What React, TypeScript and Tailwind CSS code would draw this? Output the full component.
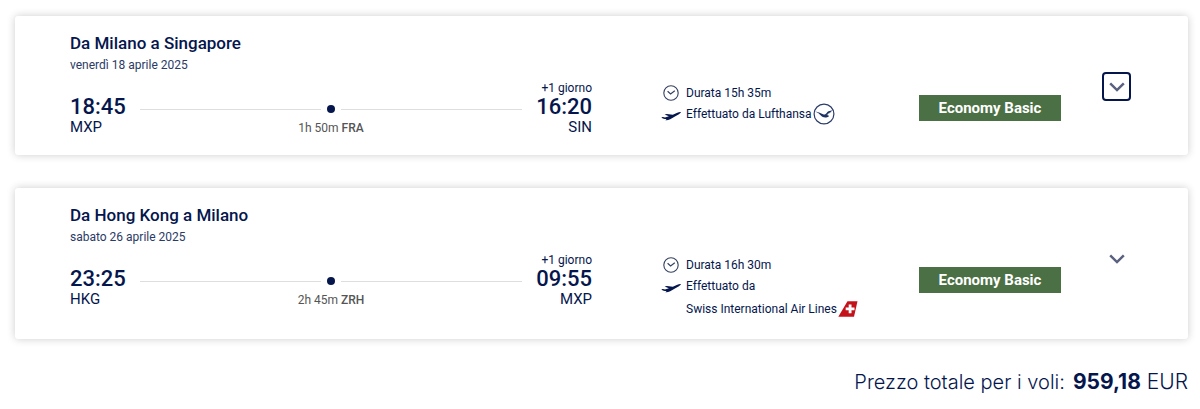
import React from "react";

type Flight = {
  title: string;
  date: string;
  departure: string;
  origin: string;
  arrival: string;
  destination: string;
  stop: string;
  stopCode: string;
  duration: string;
  carrier: "lufthansa" | "swiss";
  focused?: boolean;
};

const flights: Flight[] = [
  {
    title: "Da Milano a Singapore",
    date: "venerdì 18 aprile 2025",
    departure: "18:45",
    origin: "MXP",
    arrival: "16:20",
    destination: "SIN",
    stop: "1h 50m",
    stopCode: "FRA",
    duration: "Durata 15h 35m",
    carrier: "lufthansa",
    focused: true,
  },
  {
    title: "Da Hong Kong a Milano",
    date: "sabato 26 aprile 2025",
    departure: "23:25",
    origin: "HKG",
    arrival: "09:55",
    destination: "MXP",
    stop: "2h 45m",
    stopCode: "ZRH",
    duration: "Durata 16h 30m",
    carrier: "swiss",
  },
];

function ClockIcon() {
  return (
    <svg viewBox="0 0 16 16" className="size-4" fill="none" stroke="#35415f" aria-hidden="true">
      <circle cx="8" cy="8" r="7.2" strokeWidth="1.1" />
      <path d="M4.6 6.3 7.6 9l4.2-3.2" strokeWidth="1.2" />
    </svg>
  );
}

function PlaneIcon() {
  return (
    <svg viewBox="0 0 20 10" className="h-[10px] w-5" fill="#05164d" aria-hidden="true">
      <path d="M.3 6.2 2 5.900l2 .7 3.900-1.300L3.600 3.500l2.300-.4 5.900.700 4.500-2.100C17.600 1.200 19 .800 19.800 1.100c.2.500-.6 1.400-1.900 2.100l-4.400 2.600-4.300 2.500c-1.800.9-3.400 1.200-4.800 1l1.200-1.200c-1.700.1-3.700-.3-5.300-1.900Z" />
    </svg>
  );
}

function LufthansaLogo() {
  return (
    <svg viewBox="0 0 22 22" className="size-[22px]" fill="none" role="img" aria-label="Lufthansa">
      <circle cx="11" cy="11" r="9.9" stroke="#2c3c68" strokeWidth="1.2" />
      <path
        d="M1.300 8.300C4 8.900 6.200 9.500 8.300 10.500l2.400 1c1.500.2 2.300-.6 3-1.500.9-1.300 2.200-2.200 6.400-2.400l-2.600 1.100 1 .2-2.300.8.7.3-2.200.8.500.4-1.800.7 2.800.5-1.300.7 1.300.3-2.100.8c-2.600.5-4.500.1-6-1.400-1-1-1.600-2-2.600-2.600C4.500 9.500 3 9 1.300 8.300Z"
        fill="#1f3160"
      />
    </svg>
  );
}

function SwissLogo() {
  return (
    <svg viewBox="0 0 20 16" className="h-4 w-5" role="img" aria-label="Swiss">
      <path d="M9.5.3h10L16 15.8H.3Z" fill="#c4121a" />
      <path d="M10.7 3.5h2.8v3h3v2.800h-3v3h-2.800v-3h-3V6.500h3Z" fill="#fff" />
    </svg>
  );
}

function ChevronIcon() {
  return (
    <svg viewBox="0 0 16 10" className="h-[10px] w-4" fill="none" stroke="#5a6180" aria-hidden="true">
      <path d="M1.2 1.3 8 8.1l6.8-6.800" strokeWidth="2.500" />
    </svg>
  );
}

function Route({ flight }: { flight: Flight }) {
  return (
    <div className="mt-[5px] flex">
      <div className="pt-[18px]">
        <p className="text-[22px]/5 font-medium">{flight.departure}</p>
        <p className="text-[15px]/5">{flight.origin}</p>
      </div>
      <div className="mx-[14px] flex-1 pt-[26px]">
        <div className="flex h-2 items-center">
          <span className="h-px flex-1 bg-[#dedede]" />
          <span className="mx-[6px] size-2 rounded-full bg-[#05164d]" />
          <span className="h-px flex-1 bg-[#dedede]" />
        </div>
        <p className="mt-[7px] text-center text-[12px]/4 text-[#555]">
          {flight.stop} <span className="font-medium">{flight.stopCode}</span>
        </p>
      </div>
      <div className="text-right">
        <p className="text-[12px]/[18px]">+1 giorno</p>
        <p className="text-[22px]/5 font-medium">{flight.arrival}</p>
        <p className="text-[15px]/5">{flight.destination}</p>
      </div>
    </div>
  );
}

function Details({ flight }: { flight: Flight }) {
  const swiss = flight.carrier === "swiss";
  return (
    <div className="mt-[51px] ml-[69px] w-[258px] shrink-0 text-[12px]">
      <div className="flex h-5 items-center">
        <span className="flex w-[25px] pl-[2px]">
          <ClockIcon />
        </span>
        {flight.duration}
      </div>
      <div className="flex h-[22px] items-center">
        <span className="w-[25px] pt-[3px]">
          <PlaneIcon />
        </span>
        {swiss ? "Effettuato da" : "Effettuato da Lufthansa"}
        {!swiss && (
          <span className="ml-px">
            <LufthansaLogo />
          </span>
        )}
      </div>
      {swiss && (
        <div className="flex h-6 items-center gap-px pl-[25px]">
          Swiss International Air Lines
          <SwissLogo />
        </div>
      )}
    </div>
  );
}

function FlightCard({ flight }: { flight: Flight }) {
  return (
    <article className="flex items-start rounded-[3px] bg-white pt-4 pr-[57px] pb-[18px] pl-[55px] shadow-[0_0_8px_rgba(0,0,0,0.2)]">
      <div className="flex-1">
        <h2 className="text-[17px]/[22px] font-medium">{flight.title}</h2>
        <p className="mt-[2px] text-[12px]/[18px] text-[#2b3a66]">{flight.date}</p>
        <Route flight={flight} />
      </div>
      <Details flight={flight} />
      <p className="mt-[63px] w-[142px] shrink-0 bg-[#4c7045] text-center text-[15px]/[26px] font-bold text-white">
        Economy Basic
      </p>
      <button
        type="button"
        aria-label={`Dettagli ${flight.title}`}
        className={
          flight.focused
            ? "mt-10 ml-[41px] flex size-[29px] shrink-0 items-center justify-center rounded-[4px] border-2 border-[#05164d]"
            : "mt-10 ml-[41px] flex size-[29px] shrink-0 items-center justify-center"
        }
      >
        <ChevronIcon />
      </button>
    </article>
  );
}

export default function App() {
  return (
    <main className="bg-white pt-4 pr-3 pb-2 pl-[15px] font-['Roboto','Liberation_Sans',sans-serif] text-[#05164d]">
      <div className="flex flex-col gap-[33px]">
        {flights.map((flight) => (
          <FlightCard key={flight.title} flight={flight} />
        ))}
      </div>
      <p className="mt-[29px] flex items-baseline justify-end gap-2 font-['Inter','Liberation_Sans',sans-serif] text-[20px]/7 font-light">
        <span>Prezzo totale per i voli:</span>
        <span className="text-[21px]/7">
          <strong className="font-bold">959,18</strong> EUR
        </span>
      </p>
    </main>
  );
}
